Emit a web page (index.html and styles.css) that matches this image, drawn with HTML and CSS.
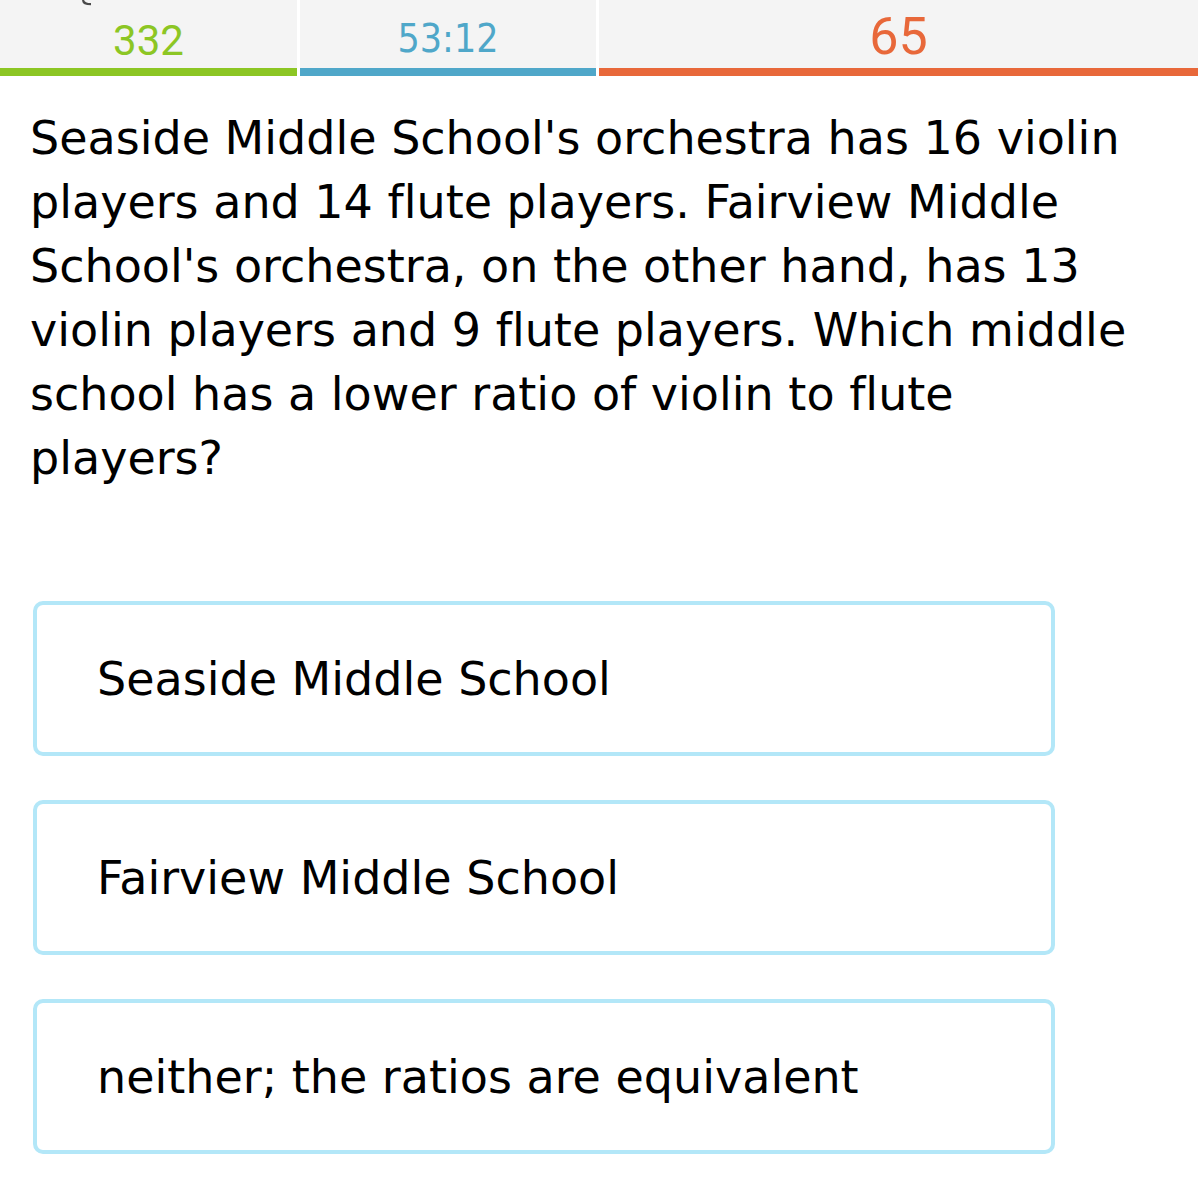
FILE: index.html
```html
<!DOCTYPE html>
<html>
<head>
<meta charset="utf-8">
<link rel="stylesheet" href="styles.css">
</head>
<body>
<div class="stats">
  <svg class="peek" width="16" height="8" viewBox="0 0 16 8"><path d="M3 0 Q3.5 4.2 11 4.2" fill="none" stroke="#4a4a4a" stroke-width="2.2"/></svg>
  <div class="cell cell-green"><span>332</span></div>
  <div class="cell cell-blue"><span>53:12</span></div>
  <div class="cell cell-orange"><span>65</span></div>
</div>
<div class="question">Seaside Middle School's orchestra has 16 violin players and 14 flute players. Fairview Middle School's orchestra, on the other hand, has 13 violin players and 9 flute players. Which middle school has a lower ratio of violin to flute players?</div>
<div class="choices">
  <div class="choice">Seaside Middle School</div>
  <div class="choice">Fairview Middle School</div>
  <div class="choice">neither; the ratios are equivalent</div>
</div>
</body>
</html>
```
FILE: styles.css
```css
html, body {
  margin: 0;
  padding: 0;
  background: #ffffff;
}
body {
  width: 1198px;
  font-family: "DejaVu Sans", Verdana, sans-serif;
  font-variant-ligatures: none;
  color: #000000;
}
.stats {
  position: relative;
  display: grid;
  grid-template-columns: 297px 296px 1fr;
  column-gap: 3px;
}
.peek {
  position: absolute;
  left: 80px;
  top: 0;
}
.cell {
  box-sizing: content-box;
  height: 68px;
  background: #f4f4f4;
  border-bottom: 8px solid;
  text-align: center;
  line-height: 1;
}
.cell span {
  display: block;
}
.cell-green {
  color: #8cc624;
  border-color: #8cc624;
  font-family: Roboto, "Liberation Sans", sans-serif;
  font-size: 42px;
}
.cell-green span { padding-top: 20px; }
.cell-blue {
  color: #4fa7c9;
  border-color: #4fa7c9;
  font-family: "DejaVu Sans Condensed", "DejaVu Sans", sans-serif;
  font-stretch: condensed;
  font-size: 39px;
}
.cell-blue span { padding-top: 19px; }
.cell-orange {
  color: #e8683a;
  border-color: #e8683a;
  font-family: Roboto, "Liberation Sans", sans-serif;
  font-size: 52px;
}
.cell-orange span { padding-top: 11px; }
.question {
  margin-top: 30px;
  padding: 0 60px 0 30px;
  font-size: 46px;
  line-height: 64px;
}
.choices {
  margin-top: 111px;
  padding-left: 33px;
  display: flex;
  flex-direction: column;
  gap: 44px;
}
.choice {
  box-sizing: border-box;
  width: 1022px;
  height: 155px;
  border: 4px solid #b3e7f8;
  border-radius: 10px;
  padding-left: 60px;
  display: flex;
  align-items: center;
  font-size: 46px;
}
```
